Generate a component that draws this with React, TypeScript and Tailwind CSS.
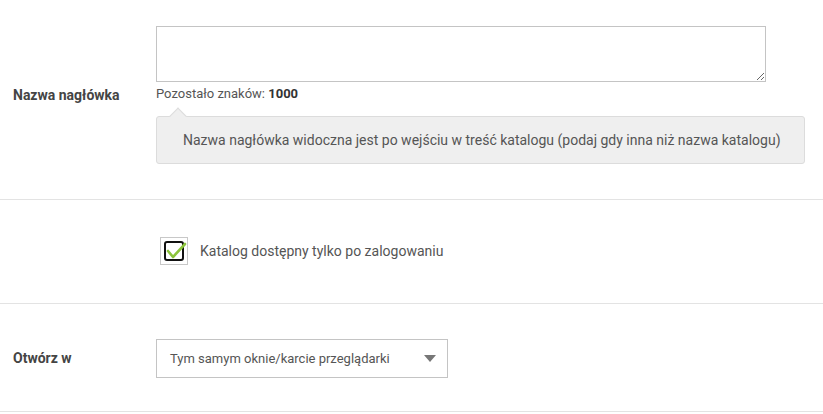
import React from "react";

export default function App() {
  return (
    <div className="w-[823px] bg-white text-[#555]" style={{ fontFamily: "Roboto, 'Liberation Sans', sans-serif" }}>
      {/* Row 1 */}
      <div className="flex items-center pt-[26px] pb-[35px] border-b border-[#e3e3e3]">
        <div className="w-[156px] pl-[13px] text-[14px] font-bold text-[#444]">Nazwa nagłówka</div>
        <div className="flex-1 pr-[18px]">
          <textarea className="block w-[610px] h-[56px] border border-[#c4c4c4] bg-white outline-none" />
          <div className="mt-[2px] text-[13px] leading-[20px] text-[#555]">
            Pozostało znaków: <span className="font-bold text-[#333]">1000</span>
          </div>
          <div className="relative mt-[12px] h-[48px] rounded-[3px] border border-[#dcdcdc] bg-[#efefef] flex items-center pl-[26px] text-[14px] text-[#555]">
            <div className="absolute left-[15px] top-[-7px] w-[12px] h-[12px] rotate-45 bg-[#efefef] border-l border-t border-[#dcdcdc]" />
            <span className="relative">Nazwa nagłówka widoczna jest po wejściu w treść katalogu (podaj gdy inna niż nazwa katalogu)</span>
          </div>
        </div>
      </div>
      {/* Row 2 */}
      <div className="flex items-center pt-[37px] pb-[38px] border-b border-[#e3e3e3]">
        <div className="w-[160px]" />
        <div className="w-[28px] h-[28px] border border-[#c8c8c8] flex items-center justify-center">
          <div className="relative w-[20px] h-[20px] rounded-[3px] border-2 border-[#111]">
            <svg className="absolute left-[0px] top-[-2px]" width="22" height="20" viewBox="0 0 22 20">
              <path d="M2 10 L7 16 L19 3" fill="none" stroke="#8cc43c" strokeWidth="2.6" strokeLinecap="round" strokeLinejoin="round" />
            </svg>
          </div>
        </div>
        <div className="ml-[12px] text-[14px] text-[#555]">Katalog dostępny tylko po zalogowaniu</div>
      </div>
      {/* Row 3 */}
      <div className="flex items-center pt-[35px] pb-[33px] border-b border-[#e3e3e3]">
        <div className="w-[156px] pl-[13px] text-[14px] font-bold text-[#444]">Otwórz w</div>
        <div className="w-[292px] h-[39px] border border-[#c4c4c4] flex items-center justify-between pl-[13px] pr-[11px] text-[13px] text-[#555]">
          <span>Tym samym oknie/karcie przeglądarki</span>
          <svg width="12" height="7" viewBox="0 0 12 7">
            <path d="M0 0 L12 0 L6 7 Z" fill="#777" />
          </svg>
        </div>
      </div>
    </div>
  );
}
